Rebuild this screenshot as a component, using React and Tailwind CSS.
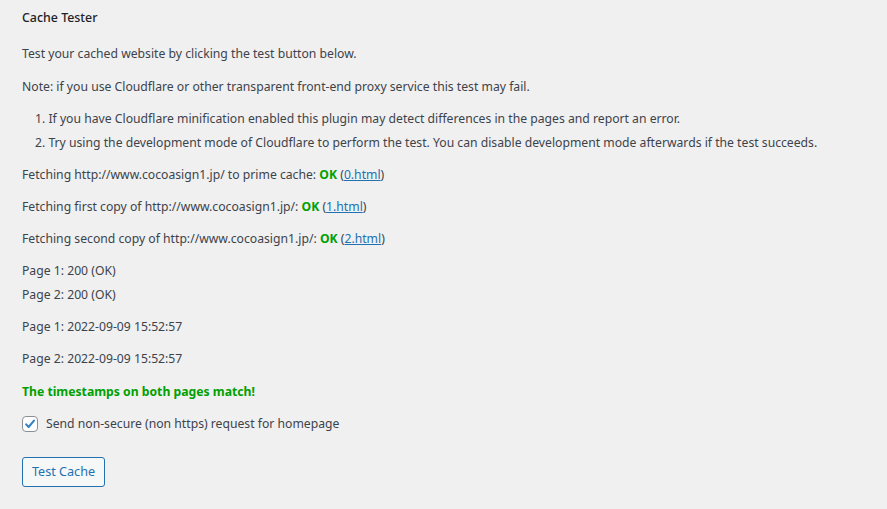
import React from "react";

function Ok() {
  return <strong className="font-bold text-[#00a000]">OK</strong>;
}

function Link({ children }) {
  return <a href="#" className="text-[#2271b1] underline">{children}</a>;
}

function Line({ className = "", children }) {
  return <div className={"h-[18px] leading-[18px] whitespace-nowrap " + className}>{children}</div>;
}

export default function App() {
  return (
    <div
      className="w-[887px] h-[509px] bg-[#f0f0f1] text-[#3c434a] text-[12.2px] pl-[22px] pt-[9px] overflow-hidden"
      style={{ fontFamily: '"Noto Sans", "Open Sans", sans-serif' }}
    >
      <Line className="font-medium text-[#1d2327] text-[12.4px]">Cache Tester</Line>
      <Line className="mt-[18px]">Test your cached website by clicking the test button below.</Line>
      <Line className="mt-[15px]">Note: if you use Cloudflare or other transparent front-end proxy service this test may fail.</Line>
      <Line className="mt-[14px] pl-[13px]">1. If you have Cloudflare minification enabled this plugin may detect differences in the pages and report an error.</Line>
      <Line className="mt-[6px] pl-[13px]">2. Try using the development mode of Cloudflare to perform the test. You can disable development mode afterwards if the test succeeds.</Line>
      <Line className="mt-[14px]">
        Fetching http://www.cocoasign1.jp/ to prime cache: <Ok /> (<Link>0.html</Link>)
      </Line>
      <Line className="mt-[14px]">
        Fetching first copy of http://www.cocoasign1.jp/: <Ok /> (<Link>1.html</Link>)
      </Line>
      <Line className="mt-[14px]">
        Fetching second copy of http://www.cocoasign1.jp/: <Ok /> (<Link>2.html</Link>)
      </Line>
      <Line className="mt-[14px]">Page 1: 200 (OK)</Line>
      <Line className="mt-[6px]">Page 2: 200 (OK)</Line>
      <Line className="mt-[14px]">Page 1: 2022-09-09 15:52:57</Line>
      <Line className="mt-[14px]">Page 2: 2022-09-09 15:52:57</Line>
      <Line className="mt-[15px] font-bold text-[#00a000]">The timestamps on both pages match!</Line>
      <div className="mt-[14px] h-[18px] flex items-center gap-[8px]">
        <span className="w-[16px] h-[16px] bg-white border border-[#8c8f94] rounded-[4px] flex items-center justify-center">
          <svg width="16" height="16" viewBox="0 0 20 20">
            <path d="M4.5 10.5l3.6 3.8 7.6-9.2" fill="none" stroke="#3582c4" strokeWidth="3" strokeLinecap="round" strokeLinejoin="round" />
          </svg>
        </span>
        <span className="leading-[18px]">Send non-secure (non https) request for homepage</span>
      </div>
      <button className="mt-[24px] h-[30px] px-[9px] bg-[#f6f7f7] border border-[#2271b1] rounded-[3px] text-[#2271b1] text-[12.6px] leading-[28px]">
        Test Cache
      </button>
    </div>
  );
}
